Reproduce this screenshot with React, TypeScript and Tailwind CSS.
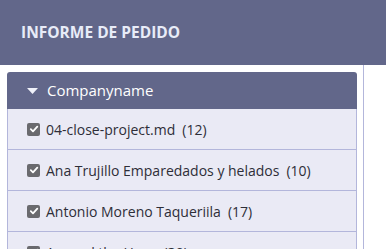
import React from "react";

const rows = [
  { name: "04-close-project.md", count: 12 },
  { name: "Ana Trujillo Emparedados y helados", count: 10 },
  { name: "Antonio Moreno Taqueriila", count: 17 },
  { name: "Around the Horn", count: 30 },
];

function Check() {
  return (
    <span className="flex h-[13px] w-[13px] shrink-0 items-center justify-center rounded-[2px] bg-[#6a6a6e]">
      <svg width="10" height="10" viewBox="0 0 10 10">
        <path d="M1.8 5.2 L4 7.3 L8.3 2.6" fill="none" stroke="#fff" strokeWidth="1.8" strokeLinecap="round" strokeLinejoin="round" />
      </svg>
    </span>
  );
}

export default function App() {
  return (
    <div
      className="relative h-[249px] w-[386px] overflow-hidden bg-white"
      style={{ fontFamily: '"Open Sans", "Noto Sans", sans-serif' }}
    >
      <div className="flex h-[65px] items-center bg-[#62678a] pl-[21px]">
        <span className="text-[15.5px] font-bold text-[#e8ecf8]">INFORME DE PEDIDO</span>
      </div>
      <div className="h-[184px] w-[364px] border-r border-[#b3b6db] pl-[7px] pt-[7px]">
        <div className="w-[350px]">
          <div className="flex h-[37px] items-center gap-[9px] rounded-t-[3px] bg-[#62678a] pl-[20px]">
            <svg width="11" height="6" viewBox="0 0 11 6">
              <path d="M0 0 L11 0 L5.5 6 Z" fill="#f0f2fa" />
            </svg>
            <span className="text-[15px] text-white">Companyname</span>
          </div>
          {rows.map((r) => (
            <div
              key={r.name}
              className="flex h-[41px] items-center gap-[6px] border-x border-b border-[#b3b6db] bg-[#eaeaf5] pl-[19px]"
            >
              <Check />
              <span className="whitespace-nowrap text-[14px] text-[#2e2e38]">
                {r.name}
                <span className="ml-[7px]">({r.count})</span>
              </span>
            </div>
          ))}
        </div>
      </div>
    </div>
  );
}
